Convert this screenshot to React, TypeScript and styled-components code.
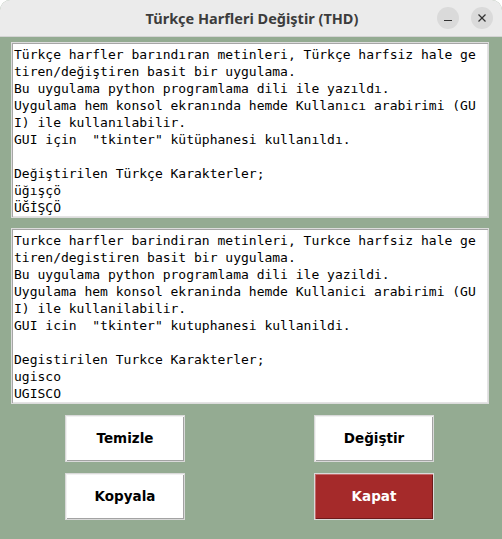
import React from "react";
import styled, { createGlobalStyle } from "styled-components";

const Global = createGlobalStyle`
  html, body { margin: 0; padding: 0; background: #ffffff; }
  body { width: 502px; height: 539px; overflow: hidden; }
`;

const Window = styled.div`
  width: 502px;
  height: 539px;
  display: flex;
  flex-direction: column;
  border-radius: 10px 10px 0 0;
  overflow: hidden;
  background: #94ab92;
  box-sizing: border-box;
`;

const TitleBar = styled.div`
  height: 36px;
  flex: 0 0 36px;
  background: #ebebeb;
  border-bottom: 1px solid #d4d4d4;
  display: grid;
  grid-template-columns: 1fr auto 1fr;
  align-items: center;
  padding: 0 9px 0 9px;
`;

const Title = styled.div`
  grid-column: 2;
  font-family: "Noto Sans", "DejaVu Sans", sans-serif;
  font-weight: 700;
  font-size: 14.5px;
  color: #3c3c3c;
  padding-left: 2px;
`;

const Controls = styled.div`
  grid-column: 3;
  justify-self: end;
  display: flex;
  gap: 12px;
  align-items: center;
`;

const CtrlButton = styled.div`
  width: 22px;
  height: 22px;
  border-radius: 50%;
  background: #dadada;
  display: flex;
  align-items: center;
  justify-content: center;
`;

const Body = styled.div`
  flex: 1;
  display: flex;
  flex-direction: column;
  padding: 5px 13px 0 11px;
`;

const TextBox = styled.div<{ $gap?: number }>`
  height: 176px;
  box-sizing: border-box;
  margin-top: ${(p) => p.$gap ?? 0}px;
  background: #ffffff;
  border: 1px solid #dcdcdc;
  box-shadow: inset 1px 1px 0 #a6a6a6, inset -1px -1px 0 #e4e4e4;
  padding: 3px 2px 0 2px;
  font-family: "DejaVu Sans Mono", monospace;
  font-size: 13px;
  line-height: 17px;
  color: #000000;
  white-space: pre;
  overflow: hidden;
`;

const ButtonGrid = styled.div`
  margin-top: 11px;
  padding-left: 54px;
  display: grid;
  grid-template-columns: 120px 120px;
  column-gap: 129px;
  row-gap: 11px;
`;

const Button = styled.div<{ $danger?: boolean }>`
  height: 47px;
  box-sizing: border-box;
  display: flex;
  align-items: center;
  justify-content: center;
  background: ${(p) => (p.$danger ? "#a52a2a" : "#ffffff")};
  color: ${(p) => (p.$danger ? "#ffffff" : "#000000")};
  border: 1px solid #d9d9d9;
  box-shadow: ${(p) =>
    p.$danger
      ? "inset 1px 1px 0 #c46a6a, inset -1px -1px 0 #6e1a1a"
      : "inset 1px 1px 0 #f2f2f2, inset -1px -1px 0 #a3a3a3"};
  font-family: "DejaVu Sans", sans-serif;
  font-weight: 700;
  font-size: 13.5px;
  padding-bottom: 2px;
`;

const original = `Türkçe harfler barındıran metinleri, Türkçe harfsiz hale ge
tiren/değiştiren basit bir uygulama.
Bu uygulama python programlama dili ile yazıldı.
Uygulama hem konsol ekranında hemde Kullanıcı arabirimi (GU
I) ile kullanılabilir.
GUI için  "tkinter" kütüphanesi kullanıldı.

Değiştirilen Türkçe Karakterler;
üğışçö
ÜĞİŞÇÖ`;

const converted = `Turkce harfler barindiran metinleri, Turkce harfsiz hale ge
tiren/degistiren basit bir uygulama.
Bu uygulama python programlama dili ile yazildi.
Uygulama hem konsol ekraninda hemde Kullanici arabirimi (GU
I) ile kullanilabilir.
GUI icin  "tkinter" kutuphanesi kullanildi.

Degistirilen Turkce Karakterler;
ugisco
UGISCO`;

export default function App() {
  return (
    <>
      <Global />
      <Window>
        <TitleBar>
          <Title>Türkçe Harfleri Değiştir (THD)</Title>
          <Controls>
            <CtrlButton>
              <svg width="10" height="10" viewBox="0 0 10 10">
                <line x1="1" y1="7.5" x2="9" y2="7.5" stroke="#333" strokeWidth="1.2" />
              </svg>
            </CtrlButton>
            <CtrlButton>
              <svg width="10" height="10" viewBox="0 0 10 10">
                <line x1="1.5" y1="1.5" x2="8.5" y2="8.5" stroke="#333" strokeWidth="1.2" />
                <line x1="8.5" y1="1.5" x2="1.5" y2="8.5" stroke="#333" strokeWidth="1.2" />
              </svg>
            </CtrlButton>
          </Controls>
        </TitleBar>
        <Body>
          <TextBox>{original}</TextBox>
          <TextBox $gap={10}>{converted}</TextBox>
          <ButtonGrid>
            <Button>Temizle</Button>
            <Button>Değiştir</Button>
            <Button>Kopyala</Button>
            <Button $danger>Kapat</Button>
          </ButtonGrid>
        </Body>
      </Window>
    </>
  );
}
